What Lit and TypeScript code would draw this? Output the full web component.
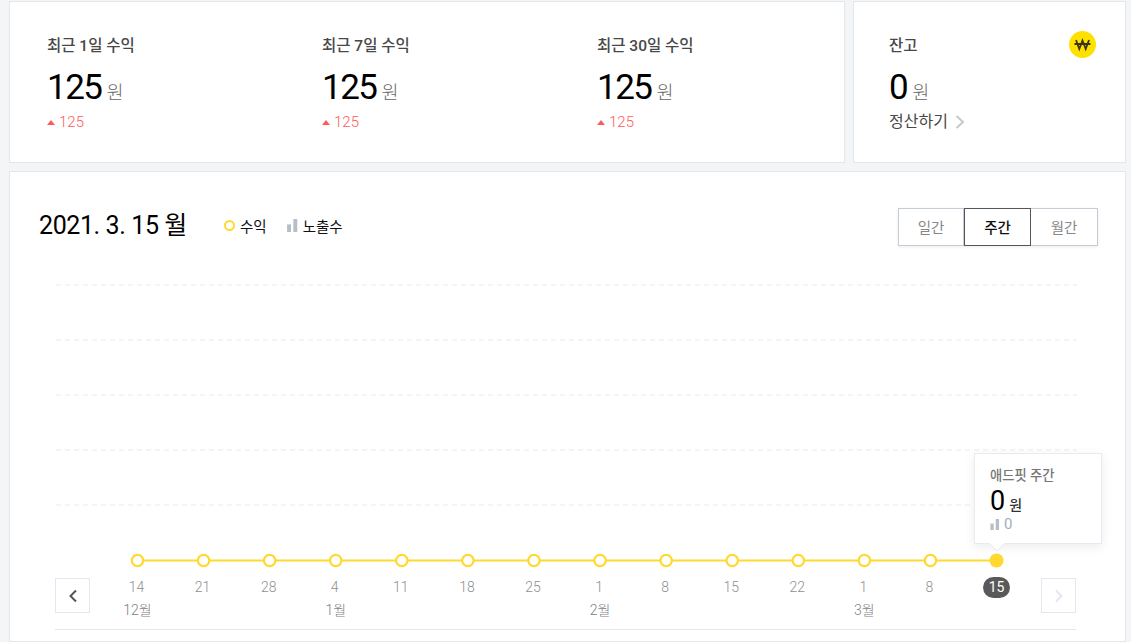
import { LitElement, html, css, svg } from "lit";
import { customElement } from "lit/decorators.js";

const DAYS = ["14", "21", "28", "4", "11", "18", "25", "1", "8", "15", "22", "1", "8", "15"];
const MONTHS: Record<number, string> = { 0: "12월", 3: "1월", 7: "2월", 11: "3월" };
const STEP = 66.08;
const FIRST_X = 127.5; // first point, relative to the card

@customElement("app-root")
export class AppRoot extends LitElement {
  static styles = css`
    :host {
      display: block;
      width: 1131px;
      height: 642px;
      overflow: hidden;
      background: #f3f5f7;
      font-family: Roboto, "Noto Sans CJK KR", sans-serif;
      color: #000;
    }
    .page {
      box-sizing: border-box;
      height: 100%;
      padding: 1px 5px 0 9px;
      display: flex;
      flex-direction: column;
      gap: 8px;
    }
    .top {
      display: flex;
      gap: 8px;
      height: 162px;
      flex: none;
    }
    .card {
      box-sizing: border-box;
      background: #fff;
      border: 1px solid #e3e6ea;
    }
    .summary {
      width: 836px;
      display: flex;
      padding: 34px 0 0 37px;
    }
    .stat {
      flex: none;
      width: 275px;
    }
    .balance {
      flex: 1;
      position: relative;
      padding: 34px 0 0 35px;
    }
    .label {
      font-size: 15.5px;
      line-height: 20px;
      font-weight: 500;
      color: #484848;
    }
    .amount {
      display: flex;
      align-items: baseline;
      margin-top: 12px;
      height: 40px;
    }
    .num {
      font-size: 35px;
      line-height: 40px;
      letter-spacing: -1.5px;
      color: #000;
    }
    .unit {
      font-size: 18.5px;
      color: #666;
      margin-left: 5px;
      font-weight: 300;
    }
    .delta {
      display: flex;
      align-items: center;
      gap: 4px;
      margin-top: 4px;
      font-size: 15px;
      line-height: 20px;
      font-weight: 300;
      color: #ff5a5a;
    }
    .tri {
      width: 0;
      height: 0;
      border-left: 4px solid transparent;
      border-right: 4px solid transparent;
      border-bottom: 5px solid #ff5a5a;
    }
    .won {
      position: absolute;
      top: 29px;
      right: 29px;
    }
    .settle {
      display: flex;
      align-items: center;
      gap: 7px;
      margin-top: 3px;
      font-size: 16px;
      line-height: 22px;
      color: #484848;
    }
    .main {
      flex: 1;
      position: relative;
      min-height: 0;
    }
    .head {
      display: flex;
      align-items: center;
      padding: 36px 27px 0 29px;
      height: 38px;
    }
    .date {
      font-size: 25px;
      line-height: 38px;
      letter-spacing: -0.4px;
      margin-top: -2px;
    }
    .legend {
      display: flex;
      align-items: center;
      gap: 5px;
      font-size: 14.5px;
      margin: -4px 0 0 37px;
      color: #111;
    }
    .legend + .legend {
      margin-left: 20px;
    }
    .ring {
      box-sizing: border-box;
      width: 11px;
      height: 11px;
      border: 2px solid #ffd92f;
      border-radius: 50%;
    }
    .tabs {
      margin-left: auto;
      display: flex;
      height: 38px;
      box-shadow: 0 1px 3px rgba(0, 0, 0, 0.08);
    }
    .tab {
      box-sizing: border-box;
      width: 67px;
      border: 1px solid #c5ccd6;
      border-left: none;
      display: flex;
      align-items: center;
      justify-content: center;
      font-size: 14.5px;
      padding-bottom: 1px;
      color: #888;
    }
    .tab:first-child {
      width: 66px;
      border-left: 1px solid #c5ccd6;
    }
    .tab.on {
      border: 1px solid #555;
      color: #111;
      font-weight: 500;
    }
    .canvas {
      position: absolute;
      inset: 0;
    }
    .plot {
      position: absolute;
      left: 0;
      top: 0;
    }
    .day,
    .month {
      position: absolute;
      width: 50px;
      margin-left: -26px;
      text-align: center;
      color: #8f8f8f;
      font-size: 14px;
      line-height: 20px;
      font-weight: 300;
    }
    .day {
      top: 405px;
    }
    .month {
      top: 428px;
      margin-left: -25px;
      color: #808080;
    }
    .day.sel {
      top: 405px;
      width: 27px;
      margin-left: -13.5px;
      line-height: 21px;
      border-radius: 11px;
      background: #595959;
      color: #fff;
      font-weight: 400;
    }
    .pager {
      position: absolute;
      top: 406px;
      box-sizing: border-box;
      width: 35px;
      height: 35px;
      border: 1px solid #e3e6ee;
      display: flex;
      align-items: center;
      justify-content: center;
    }
    .rule {
      position: absolute;
      left: 45px;
      right: 49px;
      top: 457px;
      border-top: 1px solid #e4e6ea;
    }
    .tip {
      position: absolute;
      left: 964px;
      top: 281px;
      box-sizing: border-box;
      width: 128px;
      height: 91px;
      background: #fff;
      border: 1px solid #e8eaf2;
      box-shadow: 0 3px 10px rgba(0, 0, 0, 0.08);
      padding: 12px 0 0 15px;
    }
    .tip-label {
      font-size: 13.3px;
      line-height: 20px;
      font-weight: 500;
      color: #777;
    }
    .tip-amount {
      display: flex;
      align-items: baseline;
      height: 28px;
      margin-top: 1px;
    }
    .tip-amount b {
      font-weight: 400;
      font-size: 27px;
      line-height: 28px;
    }
    .tip-amount span {
      font-size: 14px;
      font-weight: 500;
      color: #333;
      margin-left: 4px;
    }
    .tip-views {
      display: flex;
      align-items: center;
      gap: 4px;
      font-size: 15px;
      line-height: 18px;
      color: #a3adb8;
    }
    .notch {
      position: absolute;
      top: 371px;
    }
  `;

  private bars(width: number, height: number) {
    return html`<svg width=${width} height=${height} viewBox="0 0 10 12">
      <rect x="0" y="5" width="3.6" height="7" fill="#b5bec9"></rect>
      <rect x="5.8" y="0" width="3.6" height="12" fill="#b5bec9"></rect>
    </svg>`;
  }

  private stat(label: string) {
    return html`<div class="stat">
      <div class="label">${label}</div>
      <div class="amount"><span class="num">125</span><span class="unit">원</span></div>
      <div class="delta"><span class="tri"></span>125</div>
    </div>`;
  }

  private chart() {
    const xs = DAYS.map((_, i) => FIRST_X + i * STEP);
    const last = xs[xs.length - 1];
    return html`<svg class="plot" width="1117" height="471">
      ${[113, 168, 223, 278, 333].map(
        (y) => svg`<line x1="46" x2="1067" y1=${y} y2=${y} stroke="#e8eaee" stroke-dasharray="5 4"></line>`
      )}
      <line x1=${xs[0]} x2=${last} y1="388.5" y2="388.5" stroke="#ffd92f" stroke-width="2"></line>
      ${xs.map((x, i) =>
        i === xs.length - 1
          ? svg`<circle cx=${x} cy="388.5" r="7" fill="#ffd92f"></circle>`
          : svg`<circle cx=${x} cy="388.5" r="5.7" fill="#fff" stroke="#ffd92f" stroke-width="2.2"></circle>`
      )}
    </svg>`;
  }

  render() {
    return html`<div class="page">
      <div class="top">
        <div class="card summary">
          ${this.stat("최근 1일 수익")} ${this.stat("최근 7일 수익")} ${this.stat("최근 30일 수익")}
        </div>
        <div class="card balance">
          <div class="label">잔고</div>
          <div class="amount"><span class="num">0</span><span class="unit">원</span></div>
          <div class="settle">
            정산하기
            <svg width="10" height="14" viewBox="0 0 10 14">
              <path d="M1.5 1l6.5 6-6.5 6" fill="none" stroke="#c8c8c8" stroke-width="2"></path>
            </svg>
          </div>
          <svg class="won" width="27" height="27" viewBox="0 0 27 27">
            <circle cx="13.5" cy="13.5" r="13.5" fill="#ffe100"></circle>
            <path d="M7 9l3.3 9 3.2-8.5 3.2 8.5L20 9" fill="none" stroke="#3c3510" stroke-width="1.8"></path>
            <path d="M5.5 13h16" fill="none" stroke="#3c3510" stroke-width="2"></path>
          </svg>
        </div>
      </div>
      <div class="card main">
        <div class="head">
          <div class="date">2021. 3. 15 월</div>
          <div class="legend"><span class="ring"></span>수익</div>
          <div class="legend">${this.bars(11, 13)}노출수</div>
          <div class="tabs">
            <div class="tab">일간</div>
            <div class="tab on">주간</div>
            <div class="tab">월간</div>
          </div>
        </div>
        <div class="canvas">
          ${this.chart()}
          ${DAYS.map((d, i) => {
            const left = FIRST_X + i * STEP;
            const sel = i === DAYS.length - 1;
            return html`<div class="day ${sel ? "sel" : ""}" style="left:${left}px">${d}</div>
              ${MONTHS[i] ? html`<div class="month" style="left:${left}px">${MONTHS[i]}</div>` : ""}`;
          })}
          <div class="pager" style="left:45px">
            <svg width="10" height="14" viewBox="0 0 10 14">
              <path d="M8 1.5L2.5 7 8 12.5" fill="none" stroke="#555" stroke-width="2"></path>
            </svg>
          </div>
          <div class="pager" style="left:1031px">
            <svg width="10" height="14" viewBox="0 0 10 14">
              <path d="M2 1.5L7.5 7 2 12.5" fill="none" stroke="#e3e6ee" stroke-width="2"></path>
            </svg>
          </div>
          <div class="rule"></div>
          <div class="tip">
            <div class="tip-label">애드핏 주간</div>
            <div class="tip-amount"><b>0</b><span>원</span></div>
            <div class="tip-views">${this.bars(10, 11)}0</div>
          </div>
          <svg class="notch" style="left:${FIRST_X + 13 * STEP - 8}px" width="16" height="9" viewBox="0 0 16 9">
            <path d="M0 0l8 8 8-8" fill="#fff" stroke="#e8eaf2"></path>
            <path d="M1 0h14" stroke="#fff" stroke-width="2"></path>
          </svg>
        </div>
      </div>
    </div>`;
  }
}
